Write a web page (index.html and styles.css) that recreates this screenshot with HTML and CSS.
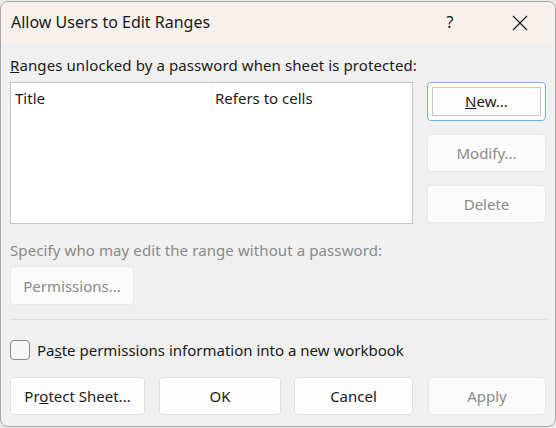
FILE: index.html
```html
<!DOCTYPE html>
<html lang="en">
<head>
  <meta charset="UTF-8">
  <title>Allow Users to Edit Ranges</title>
  <link rel="stylesheet" href="styles.css">
</head>
<body>
  <div class="dialog">
    <div class="titlebar">
      <span class="title">Allow Users to Edit Ranges</span>
      <span class="help">?</span>
      <span class="close">
        <svg width="16" height="16" viewBox="0 0 16 16"><path d="M1 1 L15 15 M15 1 L1 15" stroke="#1a1a1a" stroke-width="1.2" fill="none"/></svg>
      </span>
    </div>
    <div class="content">
      <div class="label"><u>R</u>anges unlocked by a password when sheet is protected:</div>
      <div class="top">
        <div class="list">
          <div class="list-head">
            <span class="col col-title">Title</span>
            <span class="col col-ref">Refers to cells</span>
          </div>
        </div>
        <div class="side">
          <button class="btn focus"><span class="inner"><u>N</u>ew...</span></button>
          <button class="btn off">Modify...</button>
          <button class="btn off">Delete</button>
        </div>
      </div>
      <div class="label dim spec">Specify who may edit the range without a password:</div>
      <button class="btn off perm">Permissions...</button>
      <div class="sep"></div>
      <label class="check"><span class="box"></span>Pa<u>s</u>te permissions information into a new workbook</label>
      <div class="footer">
        <button class="btn protect">Pr<u>o</u>tect Sheet...</button>
        <button class="btn ok">OK</button>
        <button class="btn cancel">Cancel</button>
        <button class="btn off apply">Apply</button>
      </div>
    </div>
  </div>
</body>
</html>
```

FILE: styles.css
```css
body {
  margin: 0;
  background: #e8e8e8;
  font-family: 'Noto Sans', 'Open Sans', sans-serif;
  font-size: 15px;
  color: #1a1a1a;
}
.dialog {
  width: 554px;
  height: 424px;
  margin-top: 1px;
  border: 1px solid #a8a8a8;
  border-radius: 8px;
  background: #f0f0f0;
  overflow: hidden;
}
.titlebar {
  height: 42px;
  background: #f8f0ed;
  display: flex;
  align-items: center;
}
.title {
  flex: 1;
  padding-left: 10px;
  font-size: 16px;
  padding-bottom: 2px;
}
.help {
  width: 20px;
  text-align: center;
  font-size: 16px;
  margin-right: 52px;
  padding-bottom: 2px;
}
.close {
  width: 16px;
  height: 16px;
  margin-right: 27px;
  display: flex;
}
.content {
  padding: 11px 8px 0 9px;
}
.label {
  line-height: 20px;
  letter-spacing: 0.1px;
}
.top {
  display: flex;
  margin-top: 7px;
}
.list {
  width: 401px;
  height: 140px;
  background: #fff;
  border: 1px solid #c4c4c4;
}
.list-head {
  display: flex;
  height: 29px;
}
.col {
  padding: 5px 0 0 4px;
  line-height: 20px;
}
.col-title {
  width: 196px;
  border-right: 1px solid #f4f4f4;
}
.col-ref {
  padding-left: 3px;
}
.side {
  display: flex;
  flex-direction: column;
  gap: 13px;
  margin-left: 14px;
}
.btn {
  font: inherit;
  color: #1a1a1a;
  background: #fdfdfd;
  border: 1px solid #e2e2e2;
  border-radius: 4px;
  width: 119px;
  height: 38px;
  padding: 0;
  box-sizing: border-box;
}
.btn.off {
  color: #8a8a8a;
  background: #fbfbfb;
  border-color: #e8e8e8;
}
.btn.focus {
  border: 1px solid #7aaee6;
  background: #fdfdfd;
  padding: 4px;
  height: 39px;
}
.inner {
  display: block;
  height: 100%;
  border: 1px solid #c8c8c8;
  box-sizing: border-box;
  line-height: 27px;
}
.spec {
  margin-top: 16px;
}
.dim {
  color: #8a8a8a;
}
.perm {
  width: 124px;
  height: 39px;
  margin-top: 6px;
}
.sep {
  height: 1px;
  background: #e0e0e0;
  margin: 14px 0 0;
  width: 537px;
}
.check {
  display: flex;
  align-items: center;
  margin-top: 20px;
  height: 20px;
}
.box {
  width: 18px;
  height: 18px;
  border: 1px solid #8a8a8a;
  border-radius: 4px;
  background: #f7f7f7;
  margin-right: 7px;
}
.footer {
  display: flex;
  margin-top: 17px;
  gap: 14px;
}
.protect { width: 135px; }
.ok { width: 122px; }
.cancel { width: 119px; margin-left: -1px; }
.apply { width: 118px; margin-left: 1px; }
```
